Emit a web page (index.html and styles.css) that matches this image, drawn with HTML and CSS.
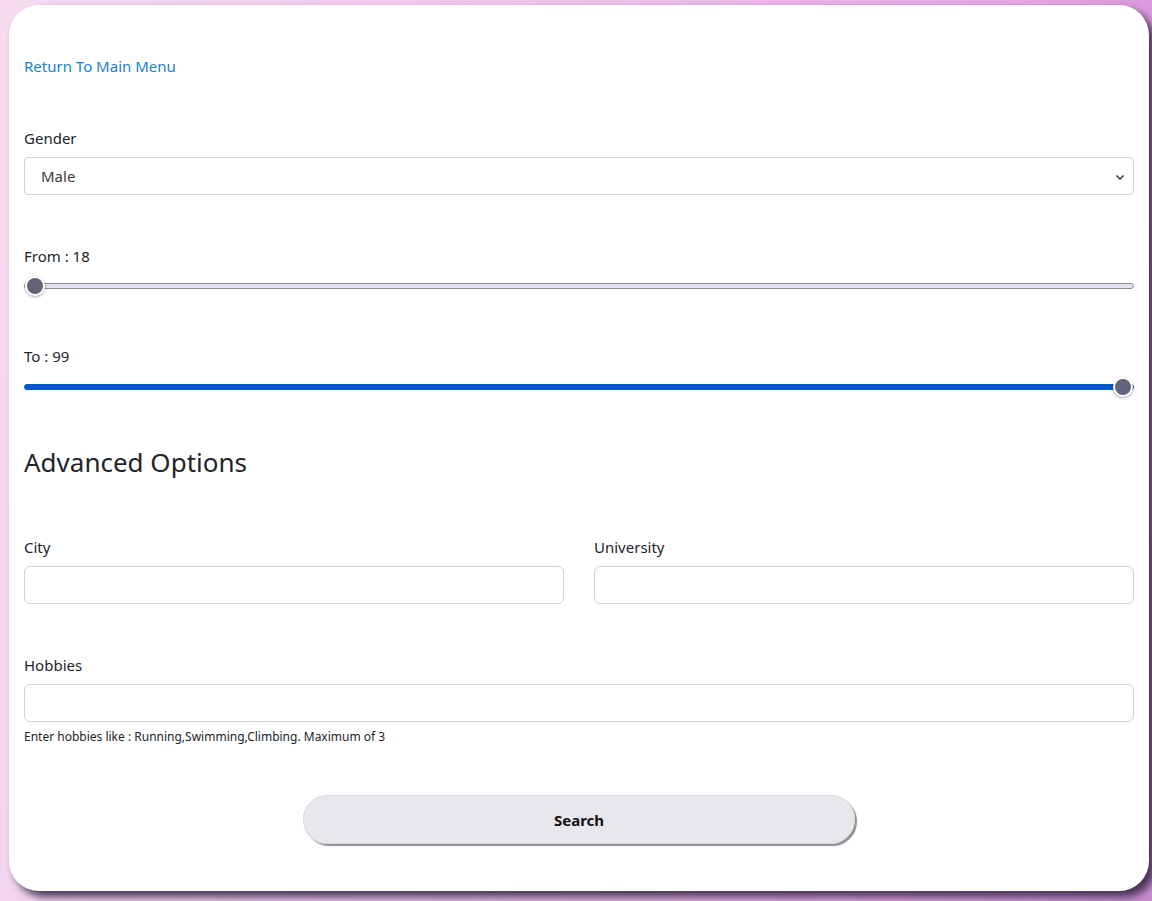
FILE: index.html
```html
<!DOCTYPE html>
<html lang="en">
<head>
<meta charset="utf-8">
<title>Search</title>
<link rel="stylesheet" href="styles.css">
</head>
<body>
<div class="card">
  <a class="back" href="#">Return To Main Menu</a>

  <div class="group gender">
    <label class="lbl">Gender</label>
    <div class="select">
      <span>Male</span>
      <svg class="chev" width="10" height="8" viewBox="0 0 10 8"><path d="M1.5 2.5 L5 6 L8.5 2.5" fill="none" stroke="#333" stroke-width="1.5"/></svg>
    </div>
  </div>

  <div class="group range-group from">
    <label class="lbl">From : 18</label>
    <input class="range" type="range" min="18" max="99" value="18">
  </div>

  <div class="group range-group to">
    <label class="lbl">To : 99</label>
    <input class="range range-full" type="range" min="18" max="99" value="99">
  </div>

  <h3 class="adv">Advanced Options</h3>

  <div class="row">
    <div class="col">
      <label class="lbl">City</label>
      <input class="text" type="text">
    </div>
    <div class="col">
      <label class="lbl">University</label>
      <input class="text" type="text">
    </div>
  </div>

  <div class="group hobbies">
    <label class="lbl">Hobbies</label>
    <input class="text" type="text">
    <small class="help">Enter hobbies like : Running,Swimming,Climbing. Maximum of 3</small>
  </div>

  <div class="actions">
    <button class="search" type="button">Search</button>
  </div>
</div>
</body>
</html>
```

FILE: styles.css
```css
* { box-sizing: border-box; }
html, body { height: 100%; }
body {
  margin: 0;
  font-family: "Noto Sans", "Open Sans", sans-serif;
  font-size: 15px;
  color: #212529;
  background: linear-gradient(100deg, #f6dcf1 0%, #efc2ec 45%, #e6a3e3 80%, #c98cd0 100%);
  padding: 5px 3px 10px 9px;
}
.card {
  width: 1140px;
  height: 886px;
  background: #fff;
  border-radius: 30px;
  box-shadow: 6px 6px 8px rgba(60, 45, 75, 0.95);
  padding: 51px 15px 0 15px;
  display: flex;
  flex-direction: column;
}
.back {
  color: #1a7fd4;
  text-decoration: none;
  font-size: 15px;
  line-height: 20px;
  align-self: flex-start;
}
.lbl {
  display: block;
  line-height: 20px;
  margin-bottom: 9px;
}
.gender { margin-top: 52px; }
.select {
  height: 38px;
  border: 1px solid #ced4da;
  border-radius: 4px;
  display: flex;
  align-items: center;
  justify-content: space-between;
  padding: 0 8px 0 16px;
  color: #3b3b3b;
}
.chev { margin-top: 1px; }
.from .lbl { margin-bottom: 10px; }
.to .lbl { margin-bottom: 11px; }
.from { margin-top: 51px; }
.to { margin-top: 50px; }
.range {
  -webkit-appearance: none;
  appearance: none;
  display: block;
  width: 100%;
  margin: 1px 0 0 0;
  height: 20px;
  background: transparent;
}
.range::-webkit-slider-runnable-track {
  height: 6px;
  background: #e2e0ef;
  border: 1px solid #8f8e99;
  border-radius: 3px;
}
.range::-webkit-slider-thumb {
  -webkit-appearance: none;
  width: 20px;
  height: 20px;
  margin-top: -8px;
  border-radius: 50%;
  background: #64637a;
  border: 2px solid #fff;
  box-shadow: 0 1px 3px rgba(0,0,0,0.35);
}
.range-full::-webkit-slider-runnable-track {
  background: #0757cd;
  border-color: #0757cd;
}
.adv {
  margin: 49px 0 0 0;
  font-size: 26px;
  font-weight: 400;
  line-height: 32px;
  color: #212529;
}
.row {
  display: grid;
  grid-template-columns: 1fr 1fr;
  gap: 30px;
  margin-top: 59px;
}
.text {
  display: block;
  width: 100%;
  height: 38px;
  border: 1px solid #ced4da;
  border-radius: 6px;
  font: inherit;
  padding: 0 12px;
}
.hobbies { margin-top: 51px; }
.help {
  display: block;
  font-size: 12px;
  line-height: 16px;
  margin-top: 7px;
  color: #212529;
}
.actions {
  display: flex;
  justify-content: center;
  margin-top: 50px;
}
.search {
  width: 552px;
  height: 49px;
  border-radius: 25px;
  border: none;
  background: #e8e7ec;
  box-shadow: 2px 2px 1px #8e8d93, inset 0 0 0 1px #dcdbe1;
  font: inherit;
  font-weight: 700;
  font-size: 15px;
  color: #111;
}
```
